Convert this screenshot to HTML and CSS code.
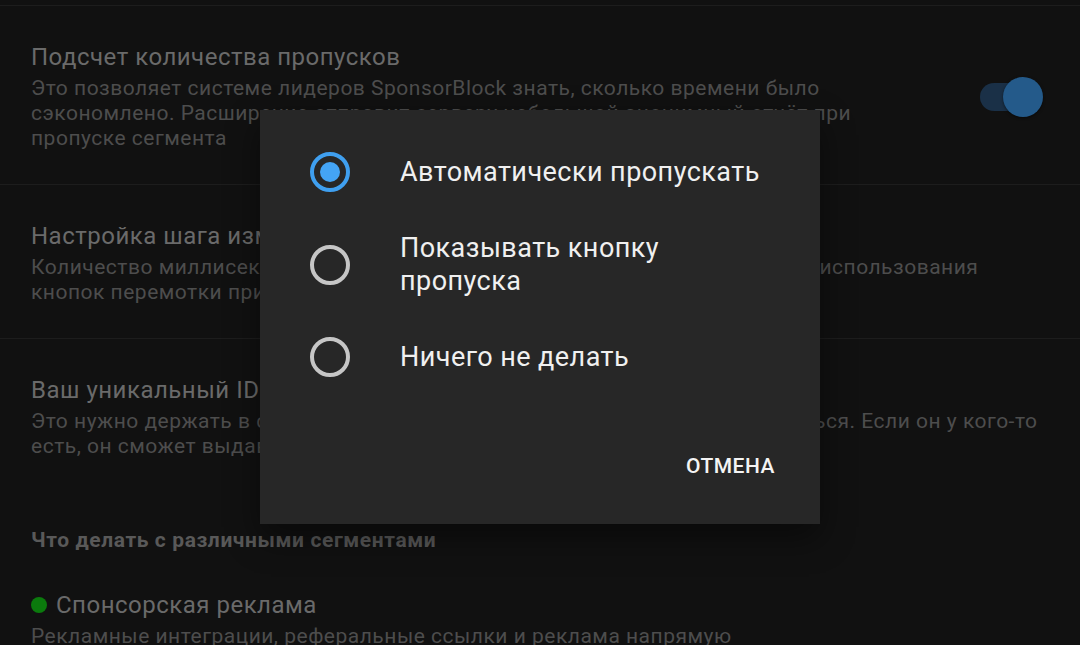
FILE: index.html
```html
<!DOCTYPE html>
<html lang="ru">
<head>
  <meta charset="UTF-8">
  <title>SponsorBlock</title>
  <link rel="stylesheet" href="styles.css">
</head>
<body>
  <!-- список настроек -->
  <div class="prefs">
    <div class="pref-stub"></div>

    <div class="pref pref-switch">
      <div class="pref-text">
        <div class="pref-title">Подсчет количества пропусков</div>
        <div class="pref-summary">Это позволяет системе лидеров SponsorBlock знать, сколько времени было<br>сэкономлено. Расширение отправит серверу небольшой анонимный отчёт при<br>пропуске сегмента</div>
      </div>
      <div class="switch">
        <span class="switch-track"></span>
        <span class="switch-thumb"></span>
      </div>
    </div>

    <div class="pref">
      <div class="pref-text">
        <div class="pref-title">Настройка шага изменения времени</div>
        <div class="pref-summary">Количество миллисекунд, на которое смещается время после нажатия для использования<br>кнопок перемотки при отправке сегментов</div>
      </div>
    </div>

    <div class="pref pref-last">
      <div class="pref-text">
        <div class="pref-title">Ваш уникальный ID</div>
        <div class="pref-summary">Это нужно держать в секрете, как и пароль, и им ни с кем не следует делиться. Если он у кого-то<br>есть, он сможет выдавать себя за вас</div>
      </div>
    </div>

    <div class="pref-category">Что делать с различными сегментами</div>

    <div class="pref pref-segment">
      <div class="pref-text">
        <div class="pref-title"><span class="dot"></span>Спонсорская реклама</div>
        <div class="pref-summary">Рекламные интеграции, реферальные ссылки и реклама напрямую</div>
      </div>
    </div>
  </div>

  <!-- диалог выбора действия -->
  <div class="dialog">
    <div class="choices">
      <div class="choice">
        <span class="radio checked"></span>
        <span class="choice-label">Автоматически пропускать</span>
      </div>
      <div class="choice">
        <span class="radio"></span>
        <span class="choice-label">Показывать кнопку<br>пропуска</span>
      </div>
      <div class="choice">
        <span class="radio"></span>
        <span class="choice-label">Ничего не делать</span>
      </div>
    </div>
    <div class="dialog-actions">
      <button class="btn-text">ОТМЕНА</button>
    </div>
  </div>
</body>
</html>
```

FILE: styles.css
```css
/* общий фон */
body {
  margin: 0;
  height: 645px;
  overflow: hidden;
  background: #111111;
  font-family: Roboto, "Noto Sans", sans-serif;
  position: relative;
}

/* список настроек */
.prefs {
  display: flex;
  flex-direction: column;
}

.pref-stub {
  height: 5px;
  border-bottom: 1px solid #1d1d1d;
}

.pref {
  display: flex;
  align-items: center;
  padding: 37px 37px 33px 31px;
  border-bottom: 1px solid #1d1d1d;
}

.pref-last {
  border-bottom: none;
}

.pref-text {
  flex: 1;
  white-space: nowrap;
  overflow: hidden;
}

.pref-title {
  font-size: 24px;
  line-height: 28px;
  letter-spacing: 0.5px;
  color: #6a6a6a;
  margin-bottom: 5px;
  display: flex;
  align-items: center;
}

.pref-summary {
  font-size: 21px;
  line-height: 25px;
  letter-spacing: 0.5px;
  color: #4d4d4d;
}

/* переключатель */
.switch {
  position: relative;
  width: 63px;
  height: 40px;
  flex-shrink: 0;
}

.switch-track {
  position: absolute;
  left: 0;
  top: 6px;
  width: 56px;
  height: 28px;
  border-radius: 14px;
  background: #1a3047;
}

.switch-thumb {
  position: absolute;
  right: 0;
  top: 0;
  width: 40px;
  height: 40px;
  border-radius: 50%;
  background: #245a8a;
  box-shadow: 0 1px 3px rgba(0, 0, 0, 0.5);
}

/* заголовок категории */
.pref-category {
  padding: 36px 31px 16px;
  font-size: 21px;
  line-height: 24px;
  letter-spacing: 0.6px;
  font-weight: bold;
  color: #595959;
}

.pref-segment {
  padding-top: 23px;
  border-bottom: none;
}

.dot {
  width: 16px;
  height: 16px;
  border-radius: 50%;
  background: #0b7a0d;
  margin-right: 9px;
}

/* диалог */
.dialog {
  position: absolute;
  left: 260px;
  top: 110px;
  width: 560px;
  height: 414px;
  background: #272727;
  box-shadow: 0 14px 32px rgba(0, 0, 0, 0.45);
  display: flex;
  flex-direction: column;
}

.choices {
  padding-top: 24px;
}

.choice {
  display: flex;
  align-items: center;
  padding: 18px 0 18px 50px;
}

.radio {
  width: 40px;
  height: 40px;
  box-sizing: border-box;
  border: 4px solid #c6c6c6;
  border-radius: 50%;
  display: flex;
  align-items: center;
  justify-content: center;
  flex-shrink: 0;
  margin-right: 50px;
}

.radio.checked {
  border-color: #3f9fef;
}

.radio.checked::after {
  content: "";
  width: 20px;
  height: 20px;
  border-radius: 50%;
  background: #44a4f4;
}

.choice-label {
  font-size: 27px;
  line-height: 33px;
  letter-spacing: 0.45px;
  padding: 3.5px 0;
  color: #f0f0f0;
}

.dialog-actions {
  display: flex;
  justify-content: flex-end;
  padding: 53px 37px 0 0;
}

.btn-text {
  background: none;
  border: none;
  padding: 0 8px;
  height: 36px;
  font-family: Roboto, sans-serif;
  font-size: 21px;
  font-weight: 500;
  letter-spacing: 0.5px;
  color: #f4f4f4;
  cursor: pointer;
}
```
